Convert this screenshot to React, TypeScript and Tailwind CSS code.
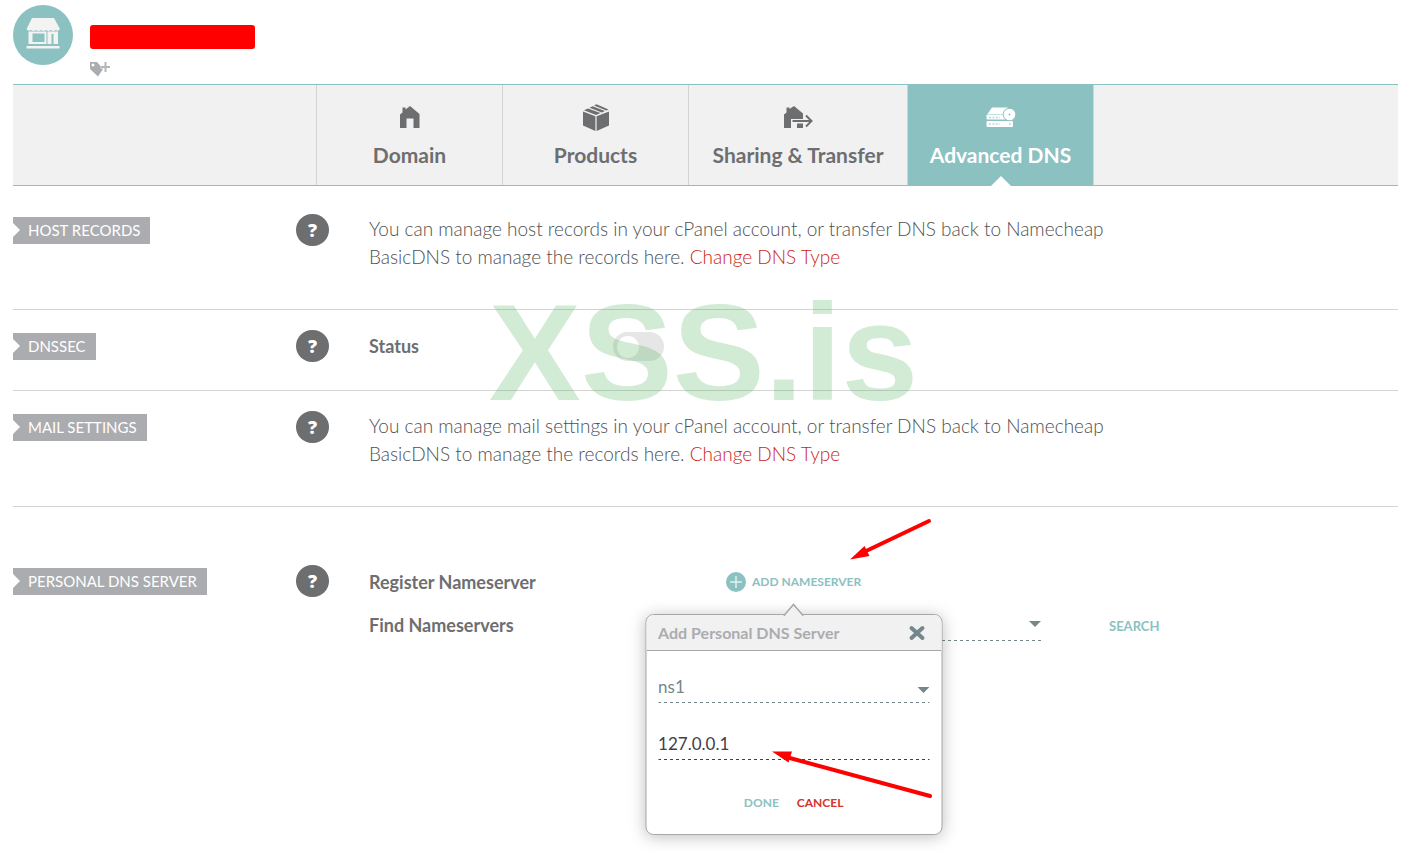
import React, { useState } from 'react';

type Tab = {
  id: string;
  title: string;
  icon: React.ReactNode;
  width: string;
};

const HomeIcon = () => (
  <svg width="20" height="22" viewBox="0 0 20 22" fill="currentColor">
    <path d="M0 8.5 L2.5 6.5 V1.5 H5.5 V3.5 L10 0 L19.5 8 V22 H13.5 V12.5 H6.5 V22 H0 Z" />
  </svg>
);

const BoxIcon = () => (
  <svg width="26" height="27" viewBox="0 0 26 27" fill="currentColor">
    <path d="M0 7.5 L12.4 12.2 V27 L0 21.5 Z" />
    <path d="M26 7.5 L13.6 12.2 V27 L26 21.5 Z" />
    <path d="M1 6.2 L5 4.4 L17.5 9 L13 11 Z" />
    <path d="M6.5 3.7 L9.6 2.3 L22 7 L18.8 8.4 Z" />
    <path d="M11 1.6 L13.5 0.3 L25.5 5.4 L23.4 6.4 Z" />
  </svg>
);

const TransferIcon = () => (
  <svg width="29" height="22" viewBox="0 0 29 22" fill="currentColor">
    <path d="M0 8.5 L2.5 6.5 V1.5 H5.5 V3 L10 0 L19 7.5 V13 H7 V22 H0 Z" />
    <path d="M13 17.5 H19 V22 H13 Z" />
    <path d="M8.5 15 H27 M22 9.5 L27.5 15 L22 20.5" fill="none" stroke="currentColor" strokeWidth="2" />
  </svg>
);

const ServerIcon = () => (
  <svg width="30" height="20" viewBox="0 0 30 20">
    <path d="M6 0.5 H22 L19 7 H1.5 Z" fill="#fff" />
    <rect x="0.5" y="7.6" width="22" height="5" rx="1" fill="#fff" />
    <rect x="0.5" y="14" width="26.5" height="6" rx="1" fill="#fff" />
    <path d="M3 10.5 H14 M3 17 H14 M23 17 H25" stroke="#b9dada" strokeWidth="1.6" strokeDasharray="2 1.4" />
    <circle cx="23.5" cy="7.5" r="6.3" fill="#fff" stroke="#8bc1c1" />
    <circle cx="23.5" cy="7.5" r="1" fill="#8bc1c1" />
  </svg>
);

const StoreIcon = () => (
  <svg width="60" height="60" viewBox="0 0 60 60">
    <circle cx="30" cy="30" r="30" fill="#8bc1c1" />
    <g fill="#f3f3f1">
      <path d="M19 13 H41 L47 24 Q45 27 42.8 25 Q40 27 38 25 Q35.5 27 33 25 Q30.5 27 28 25 Q25.5 27 23 25 Q20.5 27 18 25 Q15 27 13.5 24 Z" />
      <path fillRule="evenodd" d="M15.5 26.5 H33.5 V39 H15.5 Z M19.5 28.5 V37 H31.5 V28.5 Z" />
      <path d="M34.5 26.5 H45 V39 H40.5 V29 H38.5 V39 H34.5 Z" />
      <rect x="13.5" y="41" width="33" height="2.5" />
    </g>
  </svg>
);

const TagIcon = () => (
  <svg width="20" height="16" viewBox="0 0 20 16">
    <path fillRule="evenodd" d="M0 1 H7 L13 8 L8 15.5 L0 8 Z M3 2.4 A1.5 1.5 0 1 0 3.01 2.4 Z" fill="#abacaf" />
    <path d="M15.5 1 V11 M10.5 6 H20" stroke="#fff" strokeWidth="3" />
    <path d="M15.5 1 V11 M10.5 6 H20" stroke="#b3b8b6" strokeWidth="2" />
  </svg>
);

const PlusIcon = () => (
  <svg width="20" height="20" viewBox="0 0 20 20">
    <circle cx="10" cy="10" r="10" fill="#8bc1c1" />
    <path d="M10 4 V16 M4 10 H16" stroke="#e4f1ec" strokeWidth="1.5" />
  </svg>
);

const Caret = () => (
  <svg className="pointer-events-none absolute right-0 top-3" width="12" height="6" viewBox="0 0 12 6">
    <path d="M0 0 H12 L6 6 Z" fill="#75878a" />
  </svg>
);

const tabs: Tab[] = [
  { id: 'domain', title: 'Domain', icon: <HomeIcon />, width: 'w-[186px]' },
  { id: 'products', title: 'Products', icon: <BoxIcon />, width: 'w-[186px]' },
  { id: 'sharing', title: 'Sharing & Transfer', icon: <TransferIcon />, width: 'w-[219px]' },
  { id: 'dns', title: 'Advanced DNS', icon: <ServerIcon />, width: 'w-[186px]' },
];

// dashed underline shared by the form fields
const underline =
  'bg-[repeating-linear-gradient(90deg,#75878a_0_3px,transparent_3px_6px)] bg-[length:100%_1px] bg-bottom bg-no-repeat';
const underlineDark =
  'bg-[repeating-linear-gradient(90deg,#3f4045_0_3px,transparent_3px_6px)] bg-[length:100%_1px] bg-bottom bg-no-repeat';

function Section({ title, className, children }: { title: string; className: string; children: React.ReactNode }) {
  return (
    <section className={`flex items-start ${className}`}>
      <div className="w-[283px] shrink-0 pt-[3px]">
        <h2 className="relative inline-block bg-[#abacaf] pl-[15px] pr-[10px] text-[15px] leading-[27px] text-white">
          <svg className="absolute left-0 top-[6px]" width="7" height="14" viewBox="0 0 7 14">
            <path d="M0 0 L7 7 L0 14 Z" fill="#fff" />
          </svg>
          {title}
        </h2>
      </div>
      <button
        aria-label={`Help: ${title}`}
        className="mr-10 h-8 w-[33px] shrink-0 rounded-full bg-[#6d6e70] font-['Open_Sans',sans-serif] text-lg font-extrabold leading-8 text-white"
      >
        ?
      </button>
      <div className="min-w-0 flex-1">{children}</div>
    </section>
  );
}

function CpanelNote({ kind }: { kind: string }) {
  return (
    <p className="max-w-[760px] pt-px text-[19px] font-light leading-7 text-[#4f5052]">
      {`You can manage ${kind} in your cPanel account, or transfer DNS back to Namecheap BasicDNS to manage the records here. `}
      <a href="#dns-type" className="text-[#cc1f14]">Change DNS Type</a>
    </p>
  );
}

function AddServerPopover() {
  const [host, setHost] = useState('ns1');
  const [ip, setIp] = useState('127.0.0.1');

  return (
    <div
      role="dialog"
      aria-label="Add Personal DNS Server"
      className="absolute left-1/2 top-[42px] z-10 w-[297px] -translate-x-1/2 rounded-lg border border-[#a5a8a8] bg-white shadow-[0_2px_16px_rgba(0,0,0,0.25)]"
    >
      <svg className="absolute -top-3 left-1/2 -translate-x-1/2" width="20" height="13" viewBox="0 0 20 13">
        <path d="M0 13 L10 1.5 L20 13" fill="#f1f1f1" stroke="#a5a8a8" strokeWidth="1.5" />
      </svg>
      <div className="flex h-9 items-center justify-between rounded-t-lg border-b border-[#a5a8a8] bg-[#f1f1f1] pl-3 pr-4">
        <h3 className="text-base font-bold text-[#abacaf]">Add Personal DNS Server</h3>
        <button aria-label="Close">
          <svg width="17" height="16" viewBox="0 0 17 16">
            <path d="M3 3 L14 13 M14 3 L3 13" stroke="#75878a" strokeWidth="4" strokeLinecap="round" />
          </svg>
        </button>
      </div>
      <div className="px-3 pt-6">
        <div className="relative">
          <select
            aria-label="Nameserver"
            value={host}
            onChange={(e) => setHost(e.target.value)}
            className={`block h-7 w-full appearance-none pb-1 text-[17px] leading-6 text-[#75878a] ${underline}`}
          >
            <option value="ns1">ns1</option>
            <option value="ns2">ns2</option>
          </select>
          <Caret />
        </div>
        <input
          aria-label="IP address"
          value={ip}
          onChange={(e) => setIp(e.target.value)}
          className={`mt-7 block h-[29px] w-full pb-1 text-[17px] leading-6 text-[#3f4045] outline-none ${underlineDark}`}
        />
        <div className="flex justify-center gap-[18px] pb-[22px] pt-[34px] text-xs font-bold leading-[18px]">
          <button className="text-[#8bc1c1]">DONE</button>
          <button className="text-[#d4342a]">CANCEL</button>
        </div>
      </div>
    </div>
  );
}

function App() {
  const [active, setActive] = useState('dns');
  const [dnssec, setDnssec] = useState(false);

  return (
    <div className="relative min-h-screen overflow-hidden bg-white pl-[13px] pr-[9px] font-[Lato,sans-serif] text-[#6d6e70]">
      <header className="flex h-[84px] items-start gap-[17px] pt-[5px]">
        <StoreIcon />
        <div className="flex flex-col gap-3 pt-5">
          <div className="h-6 w-[165px] rounded-[3px] bg-[#ff0000]" />
          <button aria-label="Add tag">
            <TagIcon />
          </button>
        </div>
      </header>

      <nav className="flex h-[102px] border-y border-[#8bc1c1] bg-[#f1f1f1] pl-[303px]">
        {tabs.map((tab) => (
          <button
            key={tab.id}
            onClick={() => setActive(tab.id)}
            className={`relative flex flex-col items-center border-l border-[#d3d4d4] pt-[17px] text-[21px] font-bold leading-[30px] ${tab.width} ${
              active === tab.id ? 'bg-[#8bc1c1] text-white' : ''
            }`}
          >
            <span className="mb-2 flex h-[30px] items-center">{tab.icon}</span>
            <span className="whitespace-nowrap">{tab.title}</span>
            {active === tab.id && (
              <svg className="absolute -bottom-px left-1/2 -translate-x-1/2" width="20" height="10" viewBox="0 0 20 10">
                <path d="M0 10 L10 0 L20 10 Z" fill="#fff" />
              </svg>
            )}
          </button>
        ))}
        <div className="border-l border-[#d3d4d4]" />
      </nav>

      <main>
        <Section title="HOST RECORDS" className="border-b border-[#d3d4d4] pb-[38px] pt-7">
          <CpanelNote kind="host records" />
        </Section>

        <Section title="DNSSEC" className="border-b border-[#d3d4d4] pb-7 pt-5">
          <div className="flex items-center">
            <label htmlFor="dnssec" className="w-[244px] text-lg font-bold leading-8">
              Status
            </label>
            <input
              id="dnssec"
              type="checkbox"
              role="switch"
              checked={dnssec}
              onChange={(e) => setDnssec(e.target.checked)}
              className="h-[29px] w-[51px] appearance-none rounded-full bg-[#e6e6e6] p-1 before:block before:size-[22px] before:rounded-full before:bg-white checked:before:ml-auto"
            />
          </div>
        </Section>

        <Section title="MAIL SETTINGS" className="border-b border-[#d3d4d4] pb-[38px] pt-5">
          <CpanelNote kind="mail settings" />
        </Section>

        <Section title="PERSONAL DNS SERVER" className="pt-[58px]">
          <div className="flex h-[34px] items-center">
            <span className="w-[357px] text-lg font-bold">Register Nameserver</span>
            <div className="relative">
              <button className="flex items-center gap-[6px] whitespace-nowrap text-xs font-bold leading-5 text-[#8bc1c1]">
                <PlusIcon />
                ADD NAMESERVER
              </button>
              <AddServerPopover />
              {/* pointer arrows */}
              <svg
                className="pointer-events-none absolute -top-[56px] left-[122px] z-20"
                width="90"
                height="290"
                viewBox="0 0 90 290"
                overflow="visible"
                fill="#ff0000"
                stroke="#ff0000"
              >
                <path d="M81 5 L16 36" strokeWidth="4" strokeLinecap="round" />
                <path d="M2 43.5 L16.5 30 L21.5 40 Z" stroke="none" />
                <path d="M82 280 L-62 241" strokeWidth="4" strokeLinecap="round" />
                <path d="M-76 235.5 L-56 235.5 L-59.5 246.5 Z" stroke="none" />
              </svg>
            </div>
          </div>
          <div className="mt-[10px] flex h-8 items-center">
            <label htmlFor="find-ns" className="w-[357px] text-lg font-bold">
              Find Nameservers
            </label>
            <div className="relative">
              <select
                id="find-ns"
                className={`block h-8 w-[315px] appearance-none text-[17px] text-[#75878a] ${underline}`}
              >
                <option value=""></option>
                <option value="standard">Standard Nameservers</option>
              </select>
              <Caret />
            </div>
            <button className="ml-[68px] pt-1 text-[13px] font-bold text-[#8bc1c1]">SEARCH</button>
          </div>
        </Section>
      </main>

      <div className="pointer-events-none absolute left-1/2 top-[302px] -translate-x-1/2 select-none whitespace-nowrap font-['Liberation_Sans',sans-serif] text-[138px] font-bold leading-[100px] text-[#4caf57]/25">
        XSS.is
      </div>
    </div>
  );
}

export default App;
